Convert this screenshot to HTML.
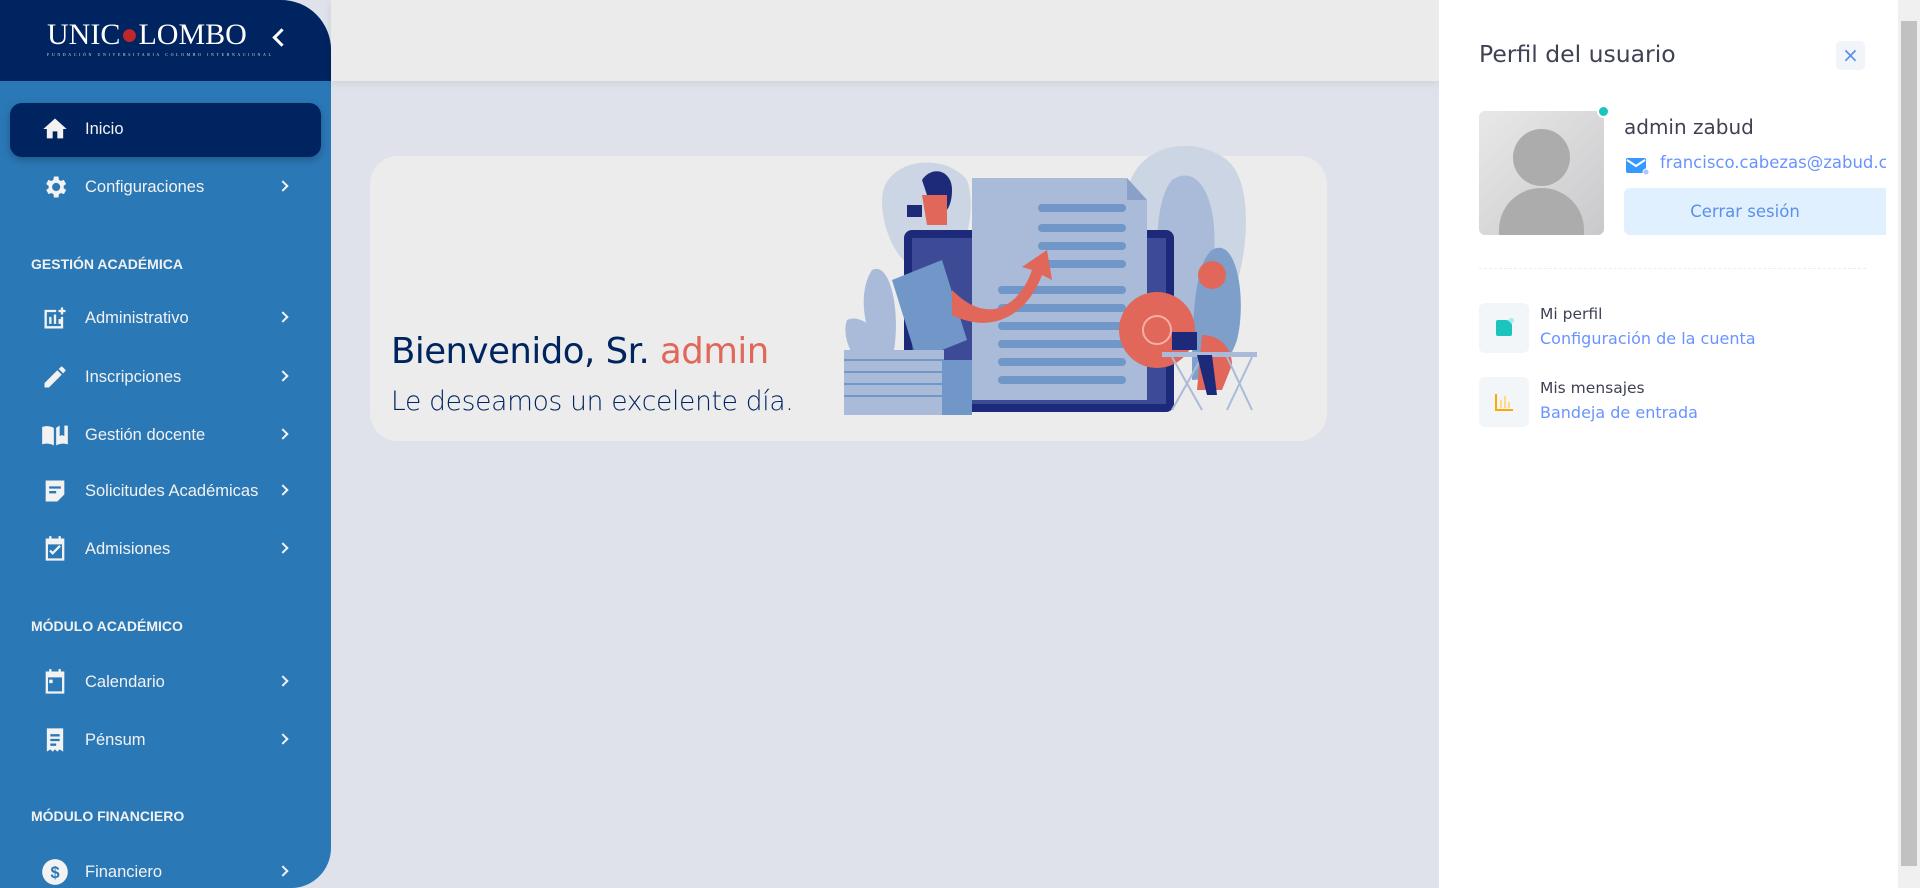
<!DOCTYPE html>
<html><head><meta charset="utf-8"><style>
*{margin:0;padding:0;box-sizing:border-box}
body{width:1920px;height:888px;overflow:hidden;background:#dfe2ea;font-family:"Liberation Sans",sans-serif;position:relative}
.sb{position:absolute;left:0;top:0;width:331px;height:888px;background:#2b78b7;border-radius:0 50px 40px 0;overflow:hidden}
.sbh{position:absolute;left:0;top:0;width:331px;height:81px;background:#00245f}
.logo{position:absolute;left:47px;top:18px;color:#fff;font-family:"Liberation Serif",serif;font-size:30px;letter-spacing:0px}
.logo small{position:absolute;left:0;top:34px;font-size:4px;letter-spacing:2.6px;white-space:nowrap;color:#ddd}
.back{position:absolute;left:275px;top:31px;width:13px;height:13px;border-left:3px solid #fff;border-bottom:3px solid #fff;transform:rotate(45deg)}
.act{position:absolute;left:10px;top:103px;width:311px;height:54px;background:#00245f;border-radius:12px;box-shadow:0 3px 8px rgba(0,0,0,.25)}
.it{position:absolute;left:0;width:331px;height:30px;color:#f2f2f2;font-size:16.5px}
.it svg{position:absolute;left:41px;top:1px;width:28px;height:28px;fill:#f2f2f2}
.it span{position:absolute;left:85px;top:6px}
.it i{position:absolute;left:279px;top:10px;width:8px;height:8px;border-right:2px solid #f2f2f2;border-top:2px solid #f2f2f2;transform:rotate(45deg)}
.hd{position:absolute;left:31px;color:#f2f2f2;font-size:14px;font-weight:bold}
.top{position:absolute;left:331px;top:0;width:1108px;height:81px;background:#ebebeb;box-shadow:0 2px 8px rgba(0,0,0,.08)}
.card{position:absolute;left:370px;top:156px;width:957px;height:285px;background:#ececec;border-radius:28px}
.t1{position:absolute;left:391px;top:331px;font-family:"DejaVu Sans",sans-serif;font-size:35.5px;color:#00245f;letter-spacing:-.5px}
.t1 b{font-weight:normal;color:#e0675a}
.t2{position:absolute;left:391px;top:386px;font-family:"DejaVu Sans",sans-serif;font-size:26.5px;color:#00245f;font-weight:200;letter-spacing:-.3px}
.rp{position:absolute;left:1439px;top:0;width:459px;height:888px;background:#fff;font-family:"DejaVu Sans",sans-serif}
.sc{position:absolute;left:1898px;top:0;width:22px;height:888px;background:#f0f0f0}
.sc div{position:absolute;left:3px;top:21px;width:16px;height:845px;background:#c1c1c1}
</style></head><body>
<div class="sb">
<div class="sbh"></div>
<div class="logo">UNIC<span style="color:#c0272d">●</span>LOMBO<small>FUNDACIÓN UNIVERSITARIA COLOMBO INTERNACIONAL</small></div>
<div class="back"></div>
<div class="act"></div>
<div class="it" style="top:114px"><svg viewBox="0 0 24 24"><path d="M10 20v-6h4v6h5v-8h3L12 3 2 12h3v8z"/></svg><span>Inicio</span></div>
<div class="it" style="top:172px"><svg viewBox="0 0 24 24"><path d="M19.4 13a7.5 7.5 0 000-2l2.1-1.6-2-3.5-2.5 1a7 7 0 00-1.7-1L15 3h-4l-.4 2.9a7 7 0 00-1.7 1l-2.5-1-2 3.5L6.6 11a7.5 7.5 0 000 2l-2.1 1.6 2 3.5 2.5-1a7 7 0 001.7 1L11 21h4l.4-2.9a7 7 0 001.7-1l2.5 1 2-3.5zM13 15.5A3.5 3.5 0 1113 8.5a3.5 3.5 0 010 7z"/></svg><span>Configuraciones</span><i></i></div>
<div class="hd" style="top:256px">GESTIÓN ACADÉMICA</div>
<div class="it" style="top:303px"><svg viewBox="0 0 24 24"><path d="M17 3h2v2h2v2h-2v2h-2V7h-2V5h2zM3 5h10v2H5v12h12v-8h2v10H3zM7 11h2v6H7zm4-2h2v8h-2zm4 4h2v4h-2z"/></svg><span>Administrativo</span><i></i></div>
<div class="it" style="top:362px"><svg viewBox="0 0 24 24"><path d="M3 17.2V21h3.8L17.8 10l-3.8-3.8zM20.7 7a1 1 0 000-1.4l-2.3-2.3a1 1 0 00-1.4 0l-1.8 1.8 3.8 3.8z"/></svg><span>Inscripciones</span><i></i></div>
<div class="it" style="top:420px"><svg viewBox="0 0 24 24"><path d="M1 5c3-1 7-1 10 1v15c-3-2-7-2-10-1zM13 6c1-1 2-1.5 3-2v9l2-1 2 1V4h3v16c-3-1-7-1-10 1z"/></svg><span>Gestión docente</span><i></i></div>
<div class="it" style="top:476px"><svg viewBox="0 0 24 24"><path d="M4 3h16v12l-6 6H4zm3 5v2h10V8zm0 4v2h6v-2z"/></svg><span>Solicitudes Académicas</span><i></i></div>
<div class="it" style="top:534px"><svg viewBox="0 0 24 24"><path d="M7 1h2v2h6V1h2v2h3v19H4V3h3zm-1 7v12h12V8zm4 9l-3-3 1.4-1.4L10 14.2l5.6-5.6L17 10z"/></svg><span>Admisiones</span><i></i></div>
<div class="hd" style="top:618px">MÓDULO ACADÉMICO</div>
<div class="it" style="top:667px"><svg viewBox="0 0 24 24"><path d="M7 1h2v2h6V1h2v2h3v19H4V3h3zm-1 7v12h12V8zm1 2h3v3H7z"/></svg><span>Calendario</span><i></i></div>
<div class="it" style="top:725px"><svg viewBox="0 0 24 24"><path d="M5 2h14v20l-3-2-2 2-2-2-2 2-2-2-3 2zm3 5v2h8V7zm0 4v2h8v-2zm0 4v2h5v-2z"/></svg><span>Pénsum</span><i></i></div>
<div class="hd" style="top:808px">MÓDULO FINANCIERO</div>
<div class="it" style="top:857px"><svg viewBox="0 0 24 24"><circle cx="12" cy="12" r="11"/><text x="12" y="17" font-size="14" text-anchor="middle" fill="#2b78b7" font-weight="bold">$</text></svg><span>Financiero</span><i></i></div>
</div>
<div class="top"></div>
<div class="card"></div>
<div class="t1">Bienvenido, Sr. <b>admin</b></div>
<div class="t2">Le deseamos un excelente día.</div>
<svg style="position:absolute;left:842px;top:140px" width="440" height="280" viewBox="0 0 440 280">
<path d="M285 60c0-50 60-70 100-40 30 25 20 110 0 150-40 20-100 0-100-50z" fill="#ccd5e3"/>
<path d="M330 40c30-20 50 30 40 90-5 40-20 70-30 80-25-40-35-140-10-170z" fill="#a9bbd8"/>
<path d="M370 110c25-15 35 50 25 90-10 30-30 40-45 40 0-40 0-115 20-130z" fill="#7f9fcb"/>
<path d="M40 60c0-40 60-50 85-20 10 30 0 80-30 90-30 10-55-30-55-70z" fill="#ccd5e3"/>
<path d="M30 130c20-10 30 50 20 90-20 0-40-60-20-90z" fill="#a9bbd8"/>
<path d="M5 180c20-10 50 30 50 70-20 0-60-40-50-70z" fill="#a9bbd8"/>
<rect x="62" y="90" width="270" height="182" rx="8" fill="#1d2a7a"/>
<rect x="70" y="98" width="254" height="166" fill="#3d4a96"/>
<path d="M130 38h155l20 22v200H130z" fill="#a9bbd8"/>
<path d="M285 38l20 22h-20z" fill="#8aa0c8"/>
<g stroke="#7097c8" stroke-width="8" stroke-linecap="round">
<line x1="200" y1="68" x2="280" y2="68"/><line x1="200" y1="88" x2="280" y2="88"/><line x1="200" y1="106" x2="280" y2="106"/><line x1="200" y1="124" x2="280" y2="124"/>
<line x1="160" y1="150" x2="280" y2="150"/><line x1="160" y1="168" x2="280" y2="168"/><line x1="160" y1="186" x2="280" y2="186"/><line x1="160" y1="204" x2="280" y2="204"/><line x1="160" y1="222" x2="280" y2="222"/><line x1="160" y1="240" x2="280" y2="240"/></g>
<path d="M50 140l50-20 25 80-50 20z" fill="#7097c8"/>
<path d="M110 150c40 40 70 10 80-20l-10-3 25-17 5 30-10-5c-15 40-50 60-90 40z" fill="#e0675a"/>
<circle cx="315" cy="190" r="38" fill="#e0675a"/><circle cx="315" cy="190" r="14" fill="none" stroke="#f4b0a8" stroke-width="2"/>
<circle cx="370" cy="135" r="14" fill="#e0675a"/>
<rect x="2" y="210" width="100" height="65" fill="#a9bbd8"/>
<g stroke="#7097c8" stroke-width="2"><line x1="2" y1="220" x2="102" y2="220"/><line x1="2" y1="232" x2="102" y2="232"/><line x1="2" y1="244" x2="102" y2="244"/><line x1="2" y1="256" x2="102" y2="256"/></g>
<rect x="100" y="220" width="30" height="55" fill="#7097c8"/>
<path d="M80 40c10-15 30-10 30 10s-10 30-20 20z" fill="#1d2a7a"/>
<path d="M80 55h25v30H85z" fill="#e0675a"/>
<rect x="65" y="65" width="15" height="12" fill="#1d2a7a"/>
<path d="M360 195c15 0 30 10 30 30l-10 25h-25z" fill="#e0675a"/>
<rect x="330" y="192" width="25" height="18" fill="#1d2a7a"/>
<rect x="320" y="212" width="95" height="5" fill="#a9bbd8"/>
<g stroke="#a9bbd8" stroke-width="2"><line x1="330" y1="217" x2="360" y2="270"/><line x1="360" y1="217" x2="330" y2="270"/><line x1="385" y1="217" x2="410" y2="270"/><line x1="410" y1="217" x2="385" y2="270"/></g>
<path d="M355 215l10 40h10l-5-40z" fill="#1d2a7a"/>
</svg>
<div class="rp">
<div style="position:absolute;left:40px;top:40px;font-size:23.5px;color:#3f4254">Perfil del usuario</div>
<div style="position:absolute;left:397px;top:41px;width:29px;height:29px;background:#f1f4f8;border-radius:5px;color:#5b8fe8;font-size:20px;text-align:center;line-height:28px">×</div>
<div style="position:absolute;left:40px;top:111px;width:125px;height:124px;border-radius:6px;background:linear-gradient(135deg,#e8e8e9,#c9c9cb);overflow:hidden">
<div style="position:absolute;left:34px;top:18px;width:57px;height:57px;border-radius:50%;background:#acacad"></div>
<div style="position:absolute;left:20px;top:77px;width:85px;height:70px;border-radius:42px 42px 0 0;background:#acacad"></div></div>
<div style="position:absolute;left:158px;top:105px;width:13px;height:13px;border-radius:50%;background:#1bc5bd;border:2px solid #fff"></div>
<div style="position:absolute;left:185px;top:115px;font-size:20px;color:#3f4254">admin zabud</div>
<svg style="position:absolute;left:187px;top:156px" width="24" height="20" viewBox="0 0 24 20"><rect x="0" y="2" width="20" height="15" rx="2" fill="#3699ff"/><path d="M1 4l9 6 9-6" stroke="#fff" stroke-width="2" fill="none"/><circle cx="20" cy="16" r="3" fill="#aac8ff" stroke="#fff"/></svg>
<div style="position:absolute;left:221px;top:153px;font-size:16.5px;color:#6993ff;white-space:nowrap;width:226px;overflow:hidden">francisco.cabezas@zabud.co</div>
<div style="position:absolute;left:185px;top:188px;width:262px;height:47px;background:#e1f0ff;border-radius:6px 0 0 6px;color:#5b8fe8;font-size:16.5px;text-align:center;line-height:47px;padding-right:20px">Cerrar sesión</div>
<div style="position:absolute;left:40px;top:268px;width:387px;border-top:1px dashed #ebedf3"></div>
<div style="position:absolute;left:40px;top:303px;width:50px;height:50px;background:#f3f6f9;border-radius:6px"><div style="position:absolute;left:17px;top:17px;width:16px;height:16px;background:#1bc5bd;border-radius:2px 6px 2px 2px"></div><div style="position:absolute;left:30px;top:15px;width:5px;height:5px;border-radius:50%;background:#a7ebe8"></div></div>
<div style="position:absolute;left:101px;top:305px;font-size:15.5px;color:#3f4254">Mi perfil</div>
<div style="position:absolute;left:101px;top:329px;font-size:16px;color:#6993ff">Configuración de la cuenta</div>
<div style="position:absolute;left:40px;top:377px;width:50px;height:50px;background:#f3f6f9;border-radius:6px"><svg style="position:absolute;left:15px;top:15px" width="20" height="20" viewBox="0 0 20 20"><path d="M2 2v16h17" stroke="#ffa800" stroke-width="2" fill="none"/><rect x="6" y="8" width="2" height="8" fill="#ffd98a"/><rect x="10" y="4" width="2" height="12" fill="#ffd98a"/><rect x="14" y="10" width="2" height="6" fill="#ffd98a"/></svg></div>
<div style="position:absolute;left:101px;top:379px;font-size:15.5px;color:#3f4254">Mis mensajes</div>
<div style="position:absolute;left:101px;top:403px;font-size:16px;color:#6993ff">Bandeja de entrada</div>
</div>
<div class="sc"><div></div></div>
</body></html>
